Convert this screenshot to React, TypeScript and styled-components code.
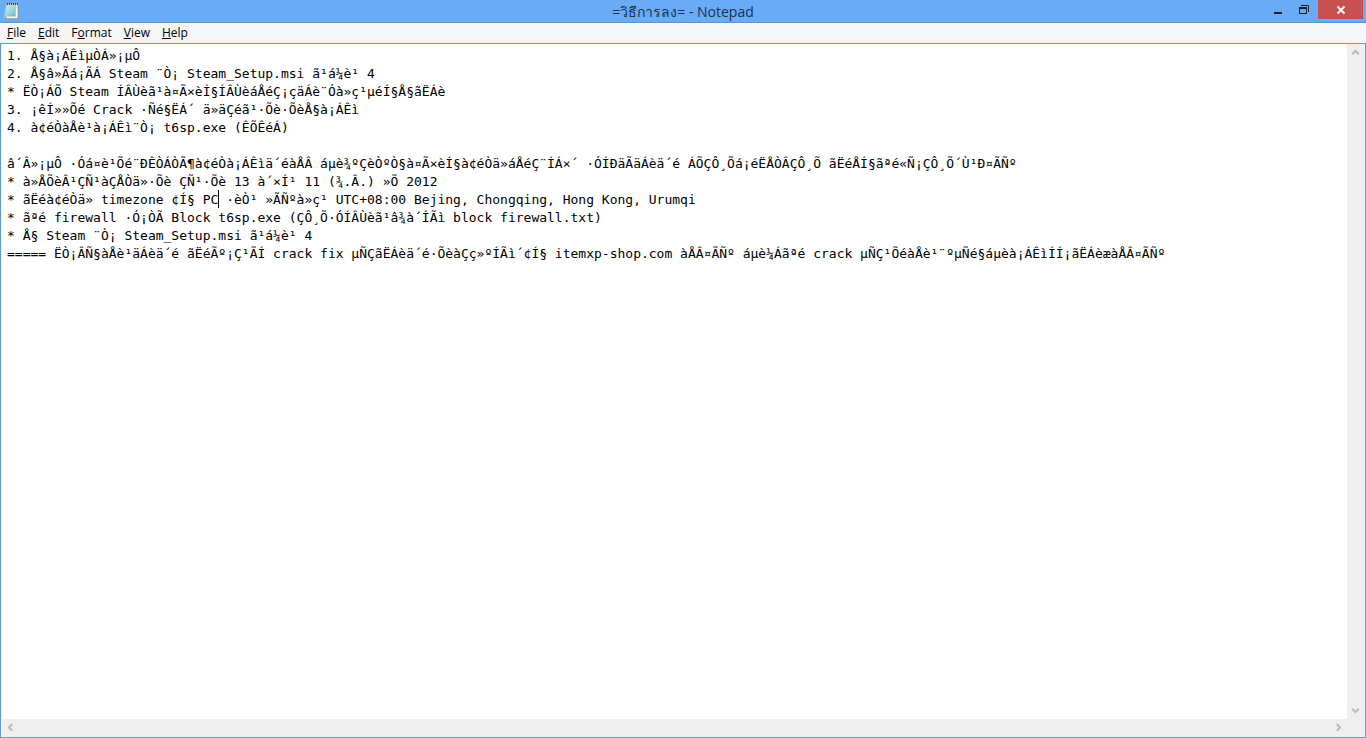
import React from "react";
import styled, { createGlobalStyle } from "styled-components";

const GlobalStyle = createGlobalStyle`
  *, *::before, *::after { box-sizing: border-box; }
  body {
    margin: 0;
    font-family: "Open Sans", "Noto Sans", sans-serif;
    font-size: 12px;
    color: #000;
  }
  button { font: inherit; color: inherit; border: 0; margin: 0; padding: 0; background: none; }
`;

const Window = styled.div`
  display: flex;
  flex-direction: column;
  height: 100vh;
  background: #f4f6f8;
`;

const TitleBar = styled.header`
  display: grid;
  grid-template-columns: 1fr auto 1fr;
  height: 23px;
  flex: none;
  background: #6aabf7;
  border-bottom: 1px solid #5b93cf;
`;

const AppIcon = styled.svg`
  width: 16px;
  height: 18px;
  margin: 2px 3px;
`;

const Title = styled.h1`
  margin: 0;
  font-size: 14px;
  font-weight: 400;
  line-height: 23px;
  color: #17324f;
  white-space: pre;
`;

const WindowControls = styled.div`
  display: flex;
  justify-content: flex-end;
  align-items: flex-start;
  padding-right: 3px;
`;

const ControlButton = styled.button<{ $close?: boolean }>`
  display: flex;
  align-items: center;
  justify-content: center;
  width: ${(p) => (p.$close ? 45 : 26)}px;
  height: 19px;
  background: ${(p) => (p.$close ? "#c75050" : "transparent")};
`;

const MenuBar = styled.nav`
  display: flex;
  flex: none;
  height: 20px;
  padding-left: 1px;
  background: #f4f6f8;
`;

const MenuItem = styled.button`
  padding: 0 6px;
  line-height: 20px;
`;

const Editor = styled.main`
  display: grid;
  grid-template-columns: 1fr 17px;
  grid-template-rows: 1fr 17px;
  flex: 1;
  min-height: 0;
  border: 1px solid #5f9ccb;
  padding: 0 1px 1px;
  background: #e4f7fb;
`;

const TextPane = styled.div`
  position: relative;
  display: flex;
  min-width: 0;
  background: #fff;
  font-family: "DejaVu Sans Mono", "Liberation Mono", monospace;
  font-size: 13px;
  line-height: 18px;
`;

const TextArea = styled.textarea`
  flex: 1;
  min-width: 0;
  margin: 0;
  border: 0;
  outline: 0;
  padding: 3px 5px;
  resize: none;
  overflow: hidden;
  white-space: pre;
  background: #fff;
  color: #000;
  font: inherit;
`;

const Caret = styled.span<{ $line: number; $column: number }>`
  position: absolute;
  left: calc(5px + ${(p) => p.$column}ch);
  top: ${(p) => 2 + p.$line * 18}px;
  width: 1px;
  height: 18px;
  background: #000;
`;

const ScrollTrack = styled.div<{ $horizontal?: boolean }>`
  display: flex;
  flex-direction: ${(p) => (p.$horizontal ? "row" : "column")};
  justify-content: space-between;
  background: #efefef;
`;

const ScrollButton = styled.button`
  display: flex;
  align-items: center;
  justify-content: center;
  width: 17px;
  height: 17px;
`;

const ScrollCorner = styled.div`
  background: #efefef;
`;

const Arrow = ({ angle }: { angle: number }) => (
  <svg width="9" height="9" viewBox="0 0 9 9" aria-hidden="true">
    <path
      d="M1.2 6.2 4.5 2.9 7.8 6.2"
      fill="none"
      stroke="#b9b9b9"
      strokeWidth="2"
      transform={`rotate(${angle} 4.5 4.5)`}
    />
  </svg>
);

const menus = [
  ["", "F", "ile"],
  ["", "E", "dit"],
  ["F", "o", "rmat"],
  ["", "V", "iew"],
  ["", "H", "elp"],
];

const content = [
  "1. Å§à¡ÁÊìµÒÁ»¡µÔ",
  "2. Å§â»Ãá¡ÃÁ Steam ¨Ò¡ Steam_Setup.msi ã¹á¼è¹ 4",
  "* ËÒ¡ÁÕ Steam ÍÂÙèã¹à¤Ã×èÍ§ÍÂÙèáÅéÇ¡çäÁè¨Óà»ç¹µéÍ§Å§ãËÁè",
  "3. ¡êÍ»»Õé Crack ·Ñé§ËÁ´ ä»äÇéã¹·Õè·ÕèÅ§à¡ÁÊì",
  "4. à¢éÒàÅè¹à¡ÁÊì¨Ò¡ t6sp.exe (ÊÕÊéÁ)",
  "",
  "â´Â»¡µÔ ·Óá¤è¹Õé¨ÐÊÒÁÒÃ¶à¢éÒà¡ÁÊìä´éàÅÂ áµè¾ºÇèÒºÒ§à¤Ã×èÍ§à¢éÒä»áÅéÇ¨ÍÁ×´ ·ÓÍÐäÃäÁèä´é ÁÕÇÔ¸Õá¡éËÅÒÂÇÔ¸Õ ãËéÅÍ§ãªé«Ñ¡ÇÔ¸Õ´Ù¹Ð¤ÃÑº",
  "* à»ÅÕèÂ¹ÇÑ¹àÇÅÒä»·Õè ÇÑ¹·Õè 13 à´×Í¹ 11 (¾.Â.) »Õ 2012",
  "* ãËéà¢éÒä» timezone ¢Í§ PC ·èÒ¹ »ÃÑºà»ç¹ UTC+08:00 Bejing, Chongqing, Hong Kong, Urumqi",
  "* ãªé firewall ·Ó¡ÒÃ Block t6sp.exe (ÇÔ¸Õ·ÓÍÂÙèã¹â¾à´ÍÃì block firewall.txt)",
  "* Å§ Steam ¨Ò¡ Steam_Setup.msi ã¹á¼è¹ 4",
  "===== ËÒ¡ÂÑ§àÅè¹äÁèä´é ãËéÃº¡Ç¹ÃÍ crack fix µÑÇãËÁèä´é·ÕèàÇç»ºÍÃì´¢Í§ itemxp-shop.com àÅÂ¤ÃÑº áµè¼Áãªé crack µÑÇ¹ÕéàÅè¹¨ºµÑé§áµèà¡ÁÊìÍÍ¡ãËÁèæàÅÂ¤ÃÑº",
].join("\n");

export default function App() {
  return (
    <Window>
      <GlobalStyle />
      <TitleBar>
        <AppIcon viewBox="0 0 16 18" aria-hidden="true">
          <defs>
            <linearGradient id="page" x1="0" y1="0" x2="1" y2="1">
              <stop offset="0" stopColor="#d9f3f4" />
              <stop offset="1" stopColor="#5fb3c2" />
            </linearGradient>
          </defs>
          <path d="M3 2.500 0.500 16 12 16.500 14 4Z" fill="#8fc4da" />
          <path d="M4 2h11v14.500H3Z" fill="#fbfbf0" stroke="#a5956f" strokeWidth="0.800" />
          <path d="M3.500 3h10L12.500 14.500H1.800Z" fill="url(#page)" />
          <path d="M3.300 6h10M3 8.500h10M2.700 11h10" stroke="#a8dbe2" strokeWidth="0.600" />
          <path d="M4 2h11" stroke="#3c4a4c" strokeWidth="1.800" strokeDasharray="1 1" />
        </AppIcon>
        <Title>=วิธีการลง= - Notepad</Title>
        <WindowControls>
          <ControlButton aria-label="Minimize">
            <svg width="12" height="12" viewBox="0 0 12 12" aria-hidden="true">
              <path d="M1 9h8" stroke="#16202c" strokeWidth="2" />
            </svg>
          </ControlButton>
          <ControlButton aria-label="Restore">
            <svg width="12" height="12" viewBox="0 0 12 12" aria-hidden="true">
              <path d="M2 1.500h7.500V8" fill="none" stroke="#16202c" />
              <path d="M0.500 4.500h7v5h-7z" fill="none" stroke="#16202c" />
              <path d="M0 4h8" stroke="#16202c" strokeWidth="2" />
            </svg>
          </ControlButton>
          <ControlButton $close aria-label="Close">
            <svg width="10" height="10" viewBox="0 0 10 10" aria-hidden="true">
              <path d="M1.500 1.500 8.500 8.500M8.500 1.500 1.500 8.500" stroke="#fff" strokeWidth="1.800" />
            </svg>
          </ControlButton>
        </WindowControls>
      </TitleBar>
      <MenuBar aria-label="Menu">
        {menus.map(([before, key, after]) => (
          <MenuItem key={before + key + after}>
            {before}
            <u>{key}</u>
            {after}
          </MenuItem>
        ))}
      </MenuBar>
      <Editor>
        <TextPane>
          <TextArea aria-label="Document text" wrap="off" spellCheck={false} defaultValue={content} />
          <Caret $line={8} $column={27} aria-hidden="true" />
        </TextPane>
        <ScrollTrack>
          <ScrollButton aria-label="Scroll up"><Arrow angle={0} /></ScrollButton>
          <ScrollButton aria-label="Scroll down"><Arrow angle={180} /></ScrollButton>
        </ScrollTrack>
        <ScrollTrack $horizontal>
          <ScrollButton aria-label="Scroll left"><Arrow angle={-90} /></ScrollButton>
          <ScrollButton aria-label="Scroll right"><Arrow angle={90} /></ScrollButton>
        </ScrollTrack>
        <ScrollCorner />
      </Editor>
    </Window>
  );
}
